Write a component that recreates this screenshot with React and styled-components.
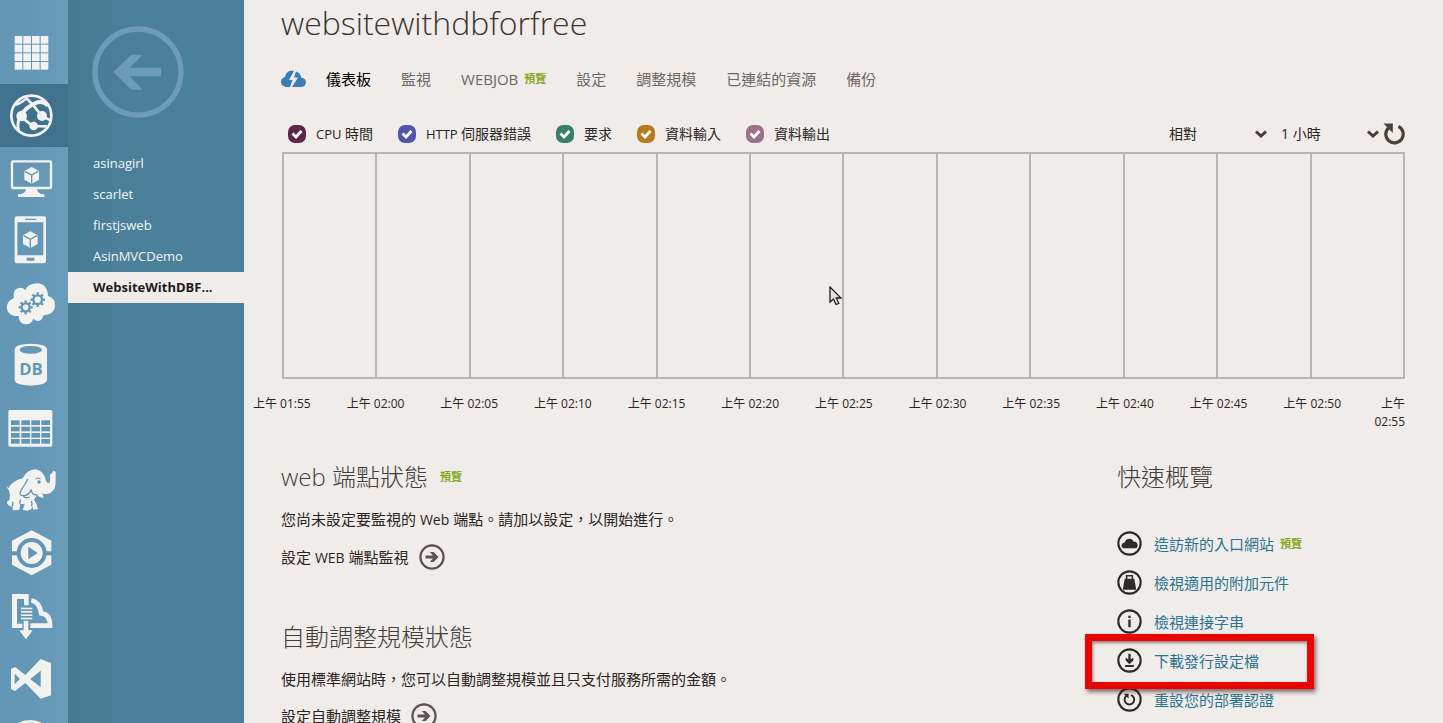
import React from "react";
import styled, { createGlobalStyle, css } from "styled-components";

const color = {
  page: "#efecea",
  rail: "#6497b5",
  railEdge: "#699cbb",
  railActive: "#40728e",
  side: "#4b7f99",
  ink: "#2b2522",
  muted: "#6e6763",
  line: "#bbb4b1",
  link: "#2a7490",
  preview: "#86a81c",
  white: "#f2f2f1",
};

const GlobalStyle = createGlobalStyle`
  *, *::before, *::after { box-sizing: border-box; }
  body { margin: 0; }
  body, button, select, input {
    font-family: "Open Sans", "Noto Sans CJK TC", sans-serif;
  }
  ul, h1, h2, p { margin: 0; padding: 0; }
  ul { list-style: none; }
  a { text-decoration: none; color: inherit; }
`;

const Shell = styled.div`
  display: flex;
  height: 100vh;
  overflow: hidden;
  background: ${color.page};
  color: ${color.ink};
`;

/* ---------- service rail ---------- */

const Rail = styled.nav`
  flex: 0 0 68px;
  padding-top: 21px;
  overflow: hidden;
  background: linear-gradient(90deg, ${color.rail} 40%, ${color.railEdge});
`;

const RailItem = styled.li`
  height: 63px;
  background: ${(p) => (p.$active ? color.railActive : "transparent")};
  &:nth-child(3n) { height: 62px; }
`;

const RailLink = styled.a`
  display: flex;
  align-items: center;
  height: 100%;
  padding-left: 4px;
  color: ${color.white};
`;

const RailGlyph = styled.svg`
  display: block;
  width: 54px;
  height: 54px;
  fill: currentColor;
  overflow: visible;
`;

/* ---------- site list ---------- */

const Sidebar = styled.aside`
  flex: 0 0 176px;
  padding-top: 26px;
  background: linear-gradient(90deg, #457891, ${color.side} 24%, #4a819c);
`;

const BackButton = styled.button`
  display: block;
  width: 92px;
  height: 92px;
  margin: 0 0 30px 24px;
  padding: 0;
  border: 0;
  background: none;
  color: #6d9cba;
  svg { display: block; }
`;

const SiteLink = styled.a`
  display: block;
  height: 31px;
  padding: 0 25px;
  overflow: hidden;
  font-size: 13px;
  line-height: 31px;
  white-space: nowrap;
  color: #f1f5f7;
  ${(p) =>
    p.$active &&
    css`
      background: ${color.page};
      color: #1d1a19;
      font-weight: 700;
    `}
`;

/* ---------- main ---------- */

const Main = styled.main`
  flex: 1;
  min-width: 0;
  overflow: hidden;
  padding: 0 38px 0 37px;
`;

const Title = styled.h1`
  height: 60px;
  font-size: 32px;
  font-weight: 300;
  line-height: 46px;
  color: #3b3430;
`;

const Tabs = styled.nav`
  display: flex;
  align-items: center;
  height: 38px;
  gap: 30px;
  font-size: 15px;
  line-height: 24px;
  color: ${color.muted};
`;

const TabLead = styled.div`
  display: flex;
  align-items: center;
  gap: 20px;
`;

const Tab = styled.a`
  display: flex;
  align-items: center;
  gap: 6px;
  white-space: nowrap;
  color: ${(p) => (p.$active ? "#000" : "inherit")};
`;

const Preview = styled.span`
  font-size: 11px;
  font-weight: 700;
  line-height: 16px;
  color: ${color.preview};
`;

const ChartBar = styled.div`
  display: flex;
  justify-content: space-between;
  align-items: center;
  height: 36px;
  margin-top: 18px;
  padding-left: 7px;
  font-size: 14px;
  line-height: 20px;
`;

const Group = styled.div`
  display: flex;
  align-items: center;
  gap: ${(p) => p.$gap}px;
`;

const MetricLabel = styled.label`
  display: flex;
  align-items: center;
  gap: 10px;
  white-space: nowrap;
`;

const Latin = styled.span`
  font-size: 13px;
`;

const Tick = styled.span`
  display: grid;
  width: 18px;
  height: 18px;
  > * { grid-area: 1 / 1; }
  svg { pointer-events: none; }
`;

const TickInput = styled.input`
  appearance: none;
  width: 18px;
  height: 18px;
  margin: 0;
  border-radius: 7px;
  background: ${(p) => p.$tone};
`;

const SelectBox = styled.span`
  display: grid;
  width: ${(p) => p.$width}px;
  align-items: center;
  > * { grid-area: 1 / 1; }
  svg { justify-self: end; pointer-events: none; }
`;

const Select = styled.select`
  appearance: none;
  width: 100%;
  padding: 0;
  border: 0;
  background: none;
  color: ${color.ink};
  font-size: 14px;
  line-height: 20px;
`;

const IconButton = styled.button`
  display: block;
  padding: 0;
  border: 0;
  background: none;
  color: #4a403c;
  svg { display: block; }
`;

const Plot = styled.div`
  position: relative;
  display: grid;
  grid-template-columns: repeat(12, 1fr);
  height: 227px;
  margin-left: 1px;
  border: 2px solid ${color.line};
  border-left: 0;
`;

const PlotColumn = styled.div`
  border-left: 2px solid ${color.line};
`;

const Pointer = styled.svg`
  position: absolute;
  left: 547px;
  top: 132px;
`;

const Axis = styled.ul`
  display: flex;
  height: 66px;
  margin: 16px 0 0 -46px;
  font-size: 12px;
  line-height: 18px;
  text-align: center;
`;

const AxisLabel = styled.li`
  flex: 1;
  white-space: nowrap;
  &:last-child {
    flex: 0 0 46px;
    text-align: right;
    white-space: normal;
  }
`;

const Columns = styled.div`
  display: flex;
  justify-content: space-between;
`;

const Status = styled.section`
  height: 160px;
`;

const Heading = styled.h2`
  display: flex;
  align-items: center;
  gap: 12px;
  font-size: 24px;
  font-weight: 300;
  line-height: 32px;
  color: #453d39;
`;

const Text = styled.p`
  margin-top: 14px;
  font-size: 15px;
  line-height: 24px;
  white-space: nowrap;
`;

const Small = styled.span`
  font-size: 14px;
`;

const ActionLink = styled.a`
  display: flex;
  align-items: center;
  gap: 10px;
  height: 26px;
  margin-top: 12px;
  font-size: 15px;
  line-height: 24px;
  svg { display: block; color: #5b5350; }
`;

const Overview = styled.aside`
  flex: 0 0 288px;
`;

const QuickList = styled.ul`
  margin-top: 31px;
`;

const QuickItem = styled.li`
  position: relative;
  display: flex;
  align-items: center;
  height: 39px;
`;

const QuickLink = styled.a`
  display: flex;
  align-items: center;
  gap: 12px;
  font-size: 15px;
  line-height: 24px;
  color: ${color.link};
  svg { display: block; color: #2d2a2a; }
`;

const QuickText = styled.span`
  display: flex;
  align-items: center;
  gap: 6px;
`;

const Marker = styled.span`
  position: absolute;
  z-index: 1;
  left: -32px;
  top: -7px;
  width: 229px;
  height: 55px;
  border: 7px solid #ea0505;
  box-shadow: 2px 3px 4px rgba(60, 20, 20, 0.6), inset 1px 2px 3px rgba(60, 20, 20, 0.5);
  pointer-events: none;
`;

/* ---------- drawings ---------- */

const bg = "#6296b4";

const Cube = ({ x, y, gap = bg }) => (
  <g transform={`translate(${x} ${y})`}>
    <path d="M0 -25 L22 -13 V13 L0 25 L-22 13 V-13 Z" />
    <path d="M-20 -12 L0 -1 L20 -12 M0 -1 V24" fill="none" stroke={gap} strokeWidth="4" />
  </g>
);

const Gear = ({ x, y, r }) => (
  <g transform={`translate(${x} ${y})`} fill="none" stroke={bg}>
    <circle r={r} strokeWidth="7" />
    {[0, 45, 90, 135, 180, 225, 270, 315].map((a) => (
      <path key={a} d={`M0 ${-r - 2} V${-r - 9}`} strokeWidth="7" transform={`rotate(${a})`} />
    ))}
  </g>
);

const services = [
  {
    name: "所有項目",
    box: "12 76 162 162",
    art: [0, 1, 2, 3].flatMap((r) =>
      [0, 1, 2, 3].map((c) => (
        <rect key={`${r}${c}`} x={44 + c * 26} y={106 + r * 26} width="23" height="23" />
      ))
    ),
  },
  {
    name: "網站",
    active: true,
    box: "12 264 162 162",
    art: (
      <g fill="none" stroke="currentColor">
        <circle cx="94" cy="344" r="60" strokeWidth="8" />
        <path d="M78 290 Q104 314 125 345 L152 358" strokeWidth="8" />
        <path d="M66 345 Q76 362 101 375 L140 376" strokeWidth="8" />
        <path d="M62 345 Q76 318 112 304 Q132 300 144 314" strokeWidth="12" />
        <path d="M60 345 Q50 370 56 388" strokeWidth="9" />
        <path d="M46 312 Q60 308 80 292" strokeWidth="7" />
        <g fill="currentColor" stroke="none">
          <circle cx="65" cy="345" r="16" />
          <circle cx="126" cy="345" r="15" />
          <circle cx="101" cy="375" r="13" />
        </g>
      </g>
    ),
  },
  {
    name: "虛擬機器",
    box: "12 453 162 162",
    art: (
      <>
        <rect x="36" y="484" width="117" height="80" rx="3" fill="none" stroke="currentColor" strokeWidth="7" />
        <path d="M78 566 H111 Q111 582 133 583 V591 H54 V583 Q78 582 78 566 Z" />
        <Cube x={95} y={526} />
      </>
    ),
  },
  {
    name: "行動服務",
    box: "12 41 162 162",
    art: (
      <>
        <path
          fillRule="evenodd"
          d="M50 48 H132 Q138 48 138 54 V183 Q138 189 132 189 H50 Q44 189 44 183 V54 Q44 48 50 48 Z M52 66 V165 H130 V66 Z M75 55 V59 H109 V55 Z M80 172 V181 H103 V172 Z"
        />
        <Cube x={91} y={118} />
      </>
    ),
  },
  {
    name: "雲端服務",
    box: "12 229 162 162",
    art: (
      <>
        <path d="M44 346 Q22 342 20 320 Q22 300 42 292 Q36 262 62 261 Q72 262 76 268 Q84 248 112 248 Q142 250 144 286 Q166 292 165 316 Q162 340 140 342 Q132 344 130 344 Q128 360 114 361 Q104 360 100 354 Q94 372 76 371 Q56 368 56 346 Z" />
        <Gear x={77} y={320} r={12} />
        <Gear x={113} y={297} r={13} />
      </>
    ),
  },
  {
    name: "SQL 資料庫",
    box: "12 416 162 162",
    art: (
      <>
        <path
          fillRule="evenodd"
          d="M44 447 Q46 431 92 430 Q139 431 141 447 V540 Q139 554 92 556 Q46 554 44 540 Z M59 448 Q60 459 92 460 Q124 459 126 448 Q124 438 92 437 Q60 438 59 448 Z"
        />
        <text x="93" y="523" textAnchor="middle" fontSize="50" fontWeight="700" fill={bg}>DB</text>
      </>
    ),
  },
  {
    name: "儲存體",
    box: "12 33 162 162",
    art: (
      <>
        <rect x="25" y="57" width="132" height="110" rx="5" />
        <g fill={bg}>
          {[88, 107, 126, 144].flatMap((y) =>
            [33, 64, 94, 124].map((x) => <rect key={`${x}-${y}`} x={x} y={y} width="26" height="14" />)
          )}
        </g>
      </>
    ),
  },
  {
    name: "HDInsight",
    box: "12 222 162 162",
    art: (
      <>
        <path d="M20 278 Q18 290 26 291 Q36 270 68 262 Q80 236 106 235 Q128 238 136 262 Q138 276 146 277 Q152 272 150 258 Q148 250 156 247 L160 239 L167 242 V268 Q168 306 138 309 Q128 310 124 306 Q132 314 130 320 Q120 322 112 312 Q104 322 102 326 Q110 336 114 354 L100 356 L98 346 Q96 358 82 359 L68 356 L74 340 L60 338 Q62 350 56 357 L38 358 L38 346 Q26 348 21 336 Q20 330 28 328 Q32 312 26 296 Q18 290 20 278 Z" />
        <g fill="none" stroke={bg} strokeWidth="4">
          <path d="M84 264 Q72 284 62 300 Q56 314 70 314 Q84 316 94 296 Q94 312 112 312" />
          <path d="M70 314 Q74 324 90 318 M36 346 Q40 342 38 332 M60 338 Q58 330 62 326" />
          <path d="M94 346 Q98 338 94 330" />
        </g>
        <circle cx="117" cy="273" r="5" fill={bg} />
        <path d="M106 264 Q114 258 122 264" fill="none" stroke={bg} strokeWidth="3" />
      </>
    ),
  },
  {
    name: "媒體服務",
    box: "12 409 162 162",
    art: (
      <>
        <path d="M95 419 L154 450 V522 L95 554 L36 522 V450 Z" />
        <circle cx="95" cy="487" r="45" fill={bg} />
        <rect x="30" y="482" width="130" height="12" fill={bg} />
        <circle cx="95" cy="487" r="33" />
        <path d="M85 468 L113 487 L85 506 Z" fill={bg} />
      </>
    ),
  },
  {
    name: "復原服務",
    box: "12 118 162 162",
    art: (
      <>
        <path d="M36 130 H86 V164 H72 V145 H51 V219 H67 V232 H36 Z" />
        <path d="M94 149 Q118 154 124 188 Q150 190 150 225 H91" fill="none" stroke="currentColor" strokeWidth="14" />
        {[171, 181, 191, 201].map((y) => (
          <rect key={y} x="63" y={y} width="34" height="5" />
        ))}
        <path d="M71 210 H85 V239 H98 L78 266 L58 239 H71 Z" />
      </>
    ),
  },
  {
    name: "Visual Studio Online",
    box: "12 306 162 162",
    art: (
      <path
        fillRule="evenodd"
        d="M33 354 L45 348 L76 372 L122 324 L153 336 V433 L122 443 L76 396 L45 420 L33 414 Z M44 368 V400 L60 384 Z M122 359 L91 384 L122 409 Z"
      />
    ),
  },
  {
    name: "快取",
    box: "12 495 162 162",
    art: <ellipse cx="90" cy="540" rx="46" ry="26" fill="none" stroke="currentColor" strokeWidth="8" />,
  },
];

const Chevron = () => (
  <svg width="12" height="8" viewBox="0 0 12 8" fill="none" stroke="#463b38" strokeWidth="3">
    <path d="M1 1.5 L6 6 L11 1.5" />
  </svg>
);

const Reload = ({ size = 22 }) => (
  <svg width={size} height={size} viewBox="0 0 22 22" fill="none" stroke="currentColor" strokeWidth="3.200">
    <path d="M15.500 3.400 A8.700 8.700 0 1 1 6 4.400" />
    <path d="M0.500 0.500 H9.800 V10 Z" fill="currentColor" stroke="none" />
  </svg>
);

const Ring = ({ size, children }) => (
  <svg width={size} height={size} viewBox="0 0 26 26" fill="currentColor">
    <circle cx="13" cy="13" r="11.6" fill="none" stroke="currentColor" strokeWidth="2.2" />
    {children}
  </svg>
);

const GoIcon = () => (
  <Ring size={26}>
    <path d="M6.500 11.600 H14 L10.800 8 H14.600 L19.500 13 L14.600 18 H10.800 L14 14.400 H6.500 Z" />
  </Ring>
);

/* ---------- data ---------- */

const sites = ["asinagirl", "scarlet", "firstjsweb", "AsinMVCDemo", "WebsiteWithDBF..."];

const tabs = [
  { label: "監視" },
  { label: "WEBJOB", preview: true },
  { label: "設定" },
  { label: "調整規模" },
  { label: "已連結的資源" },
  { label: "備份" },
];

const metrics = [
  { latin: "CPU", label: "時間", tone: "#5d2547" },
  { latin: "HTTP", label: "伺服器錯誤", tone: "#4f55a8" },
  { label: "要求", tone: "#367f6b" },
  { label: "資料輸入", tone: "#b87a1c" },
  { label: "資料輸出", tone: "#9a7186" },
];

const times = [
  "01:55", "02:00", "02:05", "02:10", "02:15", "02:20", "02:25",
  "02:30", "02:35", "02:40", "02:45", "02:50", "02:55",
];

const quick = [
  {
    label: "造訪新的入口網站",
    preview: true,
    art: <path d="M7 18 Q4 17 5 14 Q6 12 8 12 Q9 8 13 8 Q16 8 17 11 Q21 11 21.500 14.500 Q21.500 18 18.500 18 Z" />,
  },
  {
    label: "檢視適用的附加元件",
    art: (
      <>
        <path d="M8 9 H18 L20 20.500 H6 Z" />
        <path d="M10 10 V6 H16 V10" fill="none" stroke="currentColor" strokeWidth="1.600" />
      </>
    ),
  },
  {
    label: "檢視連接字串",
    art: <path d="M11.800 7 H14.200 V9.400 H11.800 Z M11.800 11 H14.200 V19 H11.800 Z" />,
  },
  {
    label: "下載發行設定檔",
    marked: true,
    art: <path d="M11.800 6 H14.200 V12 L17 10 V13 L13 17 L9 13 V10 L11.800 12 Z M8.500 17.800 H17.500 V19.800 H8.500 Z" />,
  },
  {
    label: "重設您的部署認證",
    art: (
      <>
        <path d="M14.500 8.400 A5 5 0 1 1 9.800 9.200" fill="none" stroke="currentColor" strokeWidth="2" />
        <path d="M7 7 H12 V12 Z" />
      </>
    ),
  },
];

export default function App() {
  return (
    <>
      <GlobalStyle />
      <Shell>
        <Rail aria-label="服務">
          <ul>
            {services.map((s) => (
              <RailItem key={s.name} $active={s.active}>
                <RailLink href="#" aria-label={s.name}>
                  <RailGlyph viewBox={s.box} aria-hidden="true">{s.art}</RailGlyph>
                </RailLink>
              </RailItem>
            ))}
          </ul>
        </Rail>

        <Sidebar>
          <BackButton aria-label="返回">
            <svg width="92" height="92" viewBox="275 79 276 276" fill="currentColor">
              <circle cx="413" cy="217" r="129" fill="none" stroke="currentColor" strokeWidth="16" />
              <path d="M340 217 L393 165 H427 L388 204 H482 V230 H388 L427 270 H393 Z" />
            </svg>
          </BackButton>
          <ul>
            {sites.map((name, i) => (
              <li key={name}>
                <SiteLink href="#" $active={i === sites.length - 1}>{name}</SiteLink>
              </li>
            ))}
          </ul>
        </Sidebar>

        <Main>
          <Title>websitewithdbforfree</Title>

          <Tabs>
            <TabLead>
              <svg width="25" height="18" viewBox="0 0 25 18" fill="#3b7db5" aria-hidden="true">
                <path d="M5 17 Q0 16 0 11.500 Q0 8 4 7 Q5 1 11 0.500 L13 1 L8 10 H11.500 L9 17 Z" />
                <path d="M15 1.500 Q20 3 20 7.500 Q25 8.500 25 12.500 Q24 17 20 17 H11 L17 7.500 H13 Z" />
              </svg>
              <Tab href="#" $active>儀表板</Tab>
            </TabLead>
            {tabs.map((t) => (
              <Tab key={t.label} href="#">
                {t.label}
                {t.preview && <Preview>預覽</Preview>}
              </Tab>
            ))}
          </Tabs>

          <ChartBar>
            <Group $gap={25}>
              {metrics.map((m) => (
                <MetricLabel key={m.tone}>
                  <Tick>
                    <TickInput type="checkbox" defaultChecked $tone={m.tone} />
                    <svg width="18" height="18" viewBox="0 0 18 18" fill="none" stroke="#fff" strokeWidth="2.800">
                      <path d="M4.500 8.500 L8 12 L13.500 6" />
                    </svg>
                  </Tick>
                  <span>
                    {m.latin && <Latin>{m.latin} </Latin>}
                    {m.label}
                  </span>
                </MetricLabel>
              ))}
            </Group>
            <Group $gap={4}>
              <Group $gap={14}>
                <SelectBox $width={98}>
                  <Select aria-label="範圍" defaultValue="相對">
                    <option>相對</option>
                    <option>絕對</option>
                  </Select>
                  <Chevron />
                </SelectBox>
                <SelectBox $width={98}>
                  <Select aria-label="期間" defaultValue="1 小時">
                    <option>1 小時</option>
                    <option>24 小時</option>
                  </Select>
                  <Chevron />
                </SelectBox>
              </Group>
              <IconButton aria-label="重新整理"><Reload /></IconButton>
            </Group>
          </ChartBar>

          <Plot>
            {times.slice(1).map((t) => <PlotColumn key={t} />)}
            <Pointer width="14" height="20" viewBox="0 0 14 20" aria-hidden="true">
              <path d="M1 1 V16 L4.500 13 L7 18.500 L9.800 17.300 L7.300 12 H12 Z" fill="#e4e2e1" stroke="#1f1d1d" strokeWidth="1.300" />
            </Pointer>
          </Plot>
          <Axis>
            {times.map((t) => <AxisLabel key={t}>上午 {t}</AxisLabel>)}
          </Axis>

          <Columns>
            <div>
              <Status>
                <Heading>web 端點狀態 <Preview>預覽</Preview></Heading>
                <Text>您尚未設定要監視的 <Small>Web</Small> 端點。請加以設定，以開始進行。</Text>
                <ActionLink href="#"><span>設定 <Small>WEB</Small> 端點監視</span><GoIcon /></ActionLink>
              </Status>
              <Status>
                <Heading>自動調整規模狀態</Heading>
                <Text>使用標準網站時，您可以自動調整規模並且只支付服務所需的金額。</Text>
                <ActionLink href="#">設定自動調整規模<GoIcon /></ActionLink>
              </Status>
            </div>
            <Overview>
              <Heading>快速概覽</Heading>
              <QuickList>
                {quick.map((q) => (
                  <QuickItem key={q.label}>
                    <QuickLink href="#">
                      <Ring size={25}>{q.art}</Ring>
                      <QuickText>
                        {q.label}
                        {q.preview && <Preview>預覽</Preview>}
                      </QuickText>
                    </QuickLink>
                    {q.marked && <Marker />}
                  </QuickItem>
                ))}
              </QuickList>
            </Overview>
          </Columns>
        </Main>
      </Shell>
    </>
  );
}
